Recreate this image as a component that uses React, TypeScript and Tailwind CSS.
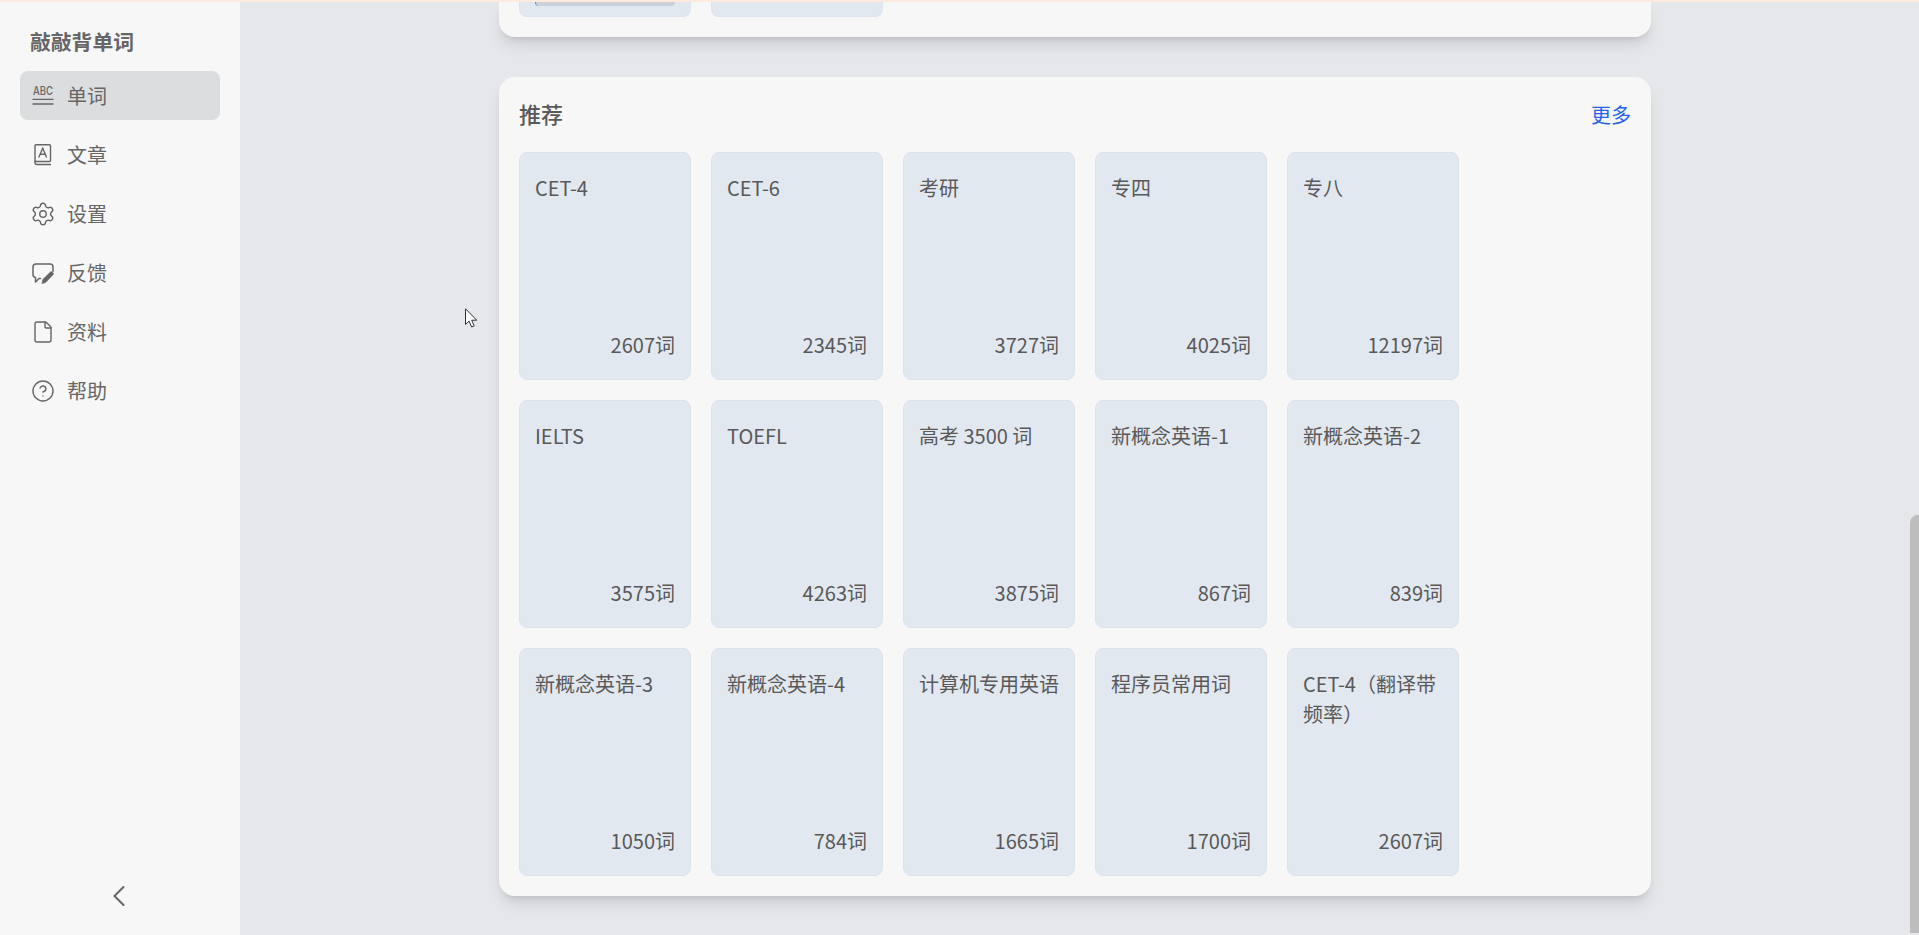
import { ChevronLeft, CircleHelp, File, Settings } from "lucide-react"

const books = [
    { name: "CET-4", count: "2607词" },
    { name: "CET-6", count: "2345词" },
    { name: "考研", count: "3727词" },
    { name: "专四", count: "4025词" },
    { name: "专八", count: "12197词" },
    { name: "IELTS", count: "3575词" },
    { name: "TOEFL", count: "4263词" },
    { name: "高考 3500 词", count: "3875词" },
    { name: "新概念英语-1", count: "867词" },
    { name: "新概念英语-2", count: "839词" },
    { name: "新概念英语-3", count: "1050词" },
    { name: "新概念英语-4", count: "784词" },
    { name: "计算机专用英语", count: "1665词" },
    { name: "程序员常用词", count: "1700词" },
    { name: "CET-4（翻译带频率）", count: "2607词" },
]

const AbcIcon = () => (
    <svg className="overflow-visible" width="24" height="24" viewBox="0 0 24 24" fill="none" stroke="currentColor" strokeWidth="1.3">
        <text x="2" y="11" textLength="20" lengthAdjust="spacingAndGlyphs" fontSize="11.5" fontWeight="500" fill="currentColor" stroke="none" fontFamily="Inter, sans-serif">ABC</text>
        <path d="M1.5 15.3h21M1.5 20h21" />
    </svg>
)

const BookIcon = () => (
    <svg width="24" height="24" viewBox="0 0 24 24" fill="none" stroke="currentColor" strokeWidth="1.4" strokeLinejoin="round" strokeLinecap="round">
        <rect x="4" y="1.8" width="15.5" height="16.7" rx="1" />
        <path d="M4 18v1.5a2 2 0 0 0 2 2h13.5" />
        <path d="M8 14l3.7-9 3.7 9M9.3 11.2h5" />
    </svg>
)

const FeedbackIcon = () => (
    <svg width="24" height="24" viewBox="0 0 24 24" fill="none" stroke="currentColor" strokeWidth="1.5" strokeLinejoin="round" strokeLinecap="round">
        <path d="M22 10.5V6a3 3 0 0 0-3-3H5a3 3 0 0 0-3 3v7.5a3 3 0 0 0 2.5 3V21l3.5-3.5h1.5" />
        <path d="M11 22.3l.8-3.8 7.6-7.5c.5-.5 1.2-.5 1.7 0l1 1c.5.5.5 1.2 0 1.7l-7.5 7.7z" fill="currentColor" strokeWidth="0.6" />
    </svg>
)

const MouseCursor = () => (
    <svg className="absolute left-[465px] top-[308px]" width="13" height="20" viewBox="0 0 13 20">
        <path d="M.5.8v15.6l3.6-3.3 2.5 5.9 2.6-1.1-2.5-5.7h5z" fill="#fff" stroke="#2b2f36" strokeWidth="1" />
    </svg>
)

const menu = [
    { label: "单词", icon: <AbcIcon />, active: true },
    { label: "文章", icon: <BookIcon /> },
    { label: "设置", icon: <Settings size={26} strokeWidth={1.3} className="-mx-px" /> },
    { label: "反馈", icon: <FeedbackIcon /> },
    { label: "资料", icon: <File size={24} strokeWidth={1.4} /> },
    { label: "帮助", icon: <CircleHelp size={24} strokeWidth={1.4} /> },
]

const App = () => {
    return (
        <div className="relative flex h-screen w-full flex-col overflow-hidden bg-[#e5e7eb] font-['Noto_Sans_CJK_SC','Noto_Sans',sans-serif] text-[#595959]">
            <div className="h-[2px] w-full bg-[#fbeadd]" />
            <div className="flex min-h-0 flex-1">
                <aside className="flex w-[240px] flex-col bg-[#f7f7f7] px-5 pt-[25px] text-[#666666]">
                    <h1 className="mb-4 pl-[10px] text-[20.8px] leading-7 font-semibold">敲敲背单词</h1>
                    <nav className="flex flex-col gap-[10px]">
                        {menu.map((item) => (
                            <div
                                key={item.label}
                                className={`flex h-[49px] items-center gap-3 rounded-lg pl-[11px] text-xl ${item.active ? "bg-[#dcddde]" : ""}`}
                            >
                                {item.icon}
                                <span>{item.label}</span>
                            </div>
                        ))}
                    </nav>
                    <div className="mt-auto flex justify-center pr-[2px] pb-[21px]">
                        <ChevronLeft size={36} strokeWidth={1.4} />
                    </div>
                </aside>
                <main className="flex min-w-0 flex-1 flex-col items-center gap-10">
                    <section className="flex w-[1152px] gap-5 rounded-b-2xl bg-[#f7f7f7] px-5 pb-5 shadow-[0_10px_15px_-3px_rgb(0_0_0_/_0.12),0_4px_6px_-4px_rgb(0_0_0_/_0.12)]">
                        <div className="h-[15px] w-[172px] rounded-b-lg border-x border-b border-[#dde3ea] bg-[#e2e8f0] px-[15px]">
                            <div className="h-[4px] rounded-b border-l border-l-[#3b82f6] bg-[#cbd2dc]" />
                        </div>
                        <div className="h-[15px] w-[172px] rounded-b-lg border-x border-b border-[#dde3ea] bg-[#e2e8f0]" />
                    </section>
                    <section className="w-[1152px] rounded-2xl bg-[#f7f7f7] p-5 shadow-[0_10px_15px_-3px_rgb(0_0_0_/_0.12),0_4px_6px_-4px_rgb(0_0_0_/_0.12)]">
                        <div className="mb-[19px] flex h-9 items-start justify-between">
                            <h2 className="text-[22px] leading-8 font-medium">推荐</h2>
                            <span className="mt-1 text-xl leading-7 text-[#2563eb]">更多</span>
                        </div>
                        <div className="flex flex-wrap gap-5">
                            {books.map((book, i) => (
                                <div
                                    key={i}
                                    className="flex h-[228px] w-[172px] flex-col justify-between rounded-lg border border-[#dde3ea] bg-[#e2e8f0] px-[15px] pt-5 pb-[19px] text-xl leading-[30px]"
                                >
                                    <p>{book.name}</p>
                                    <p className="text-right">{book.count}</p>
                                </div>
                            ))}
                        </div>
                    </section>
                </main>
                <div className="flex w-[9px] flex-col justify-end pb-[2px]">
                    <div className="h-[418px] rounded-tl-lg bg-[#bdbdbd]" />
                </div>
            </div>
            <MouseCursor />
        </div>
    )
}

export default App
